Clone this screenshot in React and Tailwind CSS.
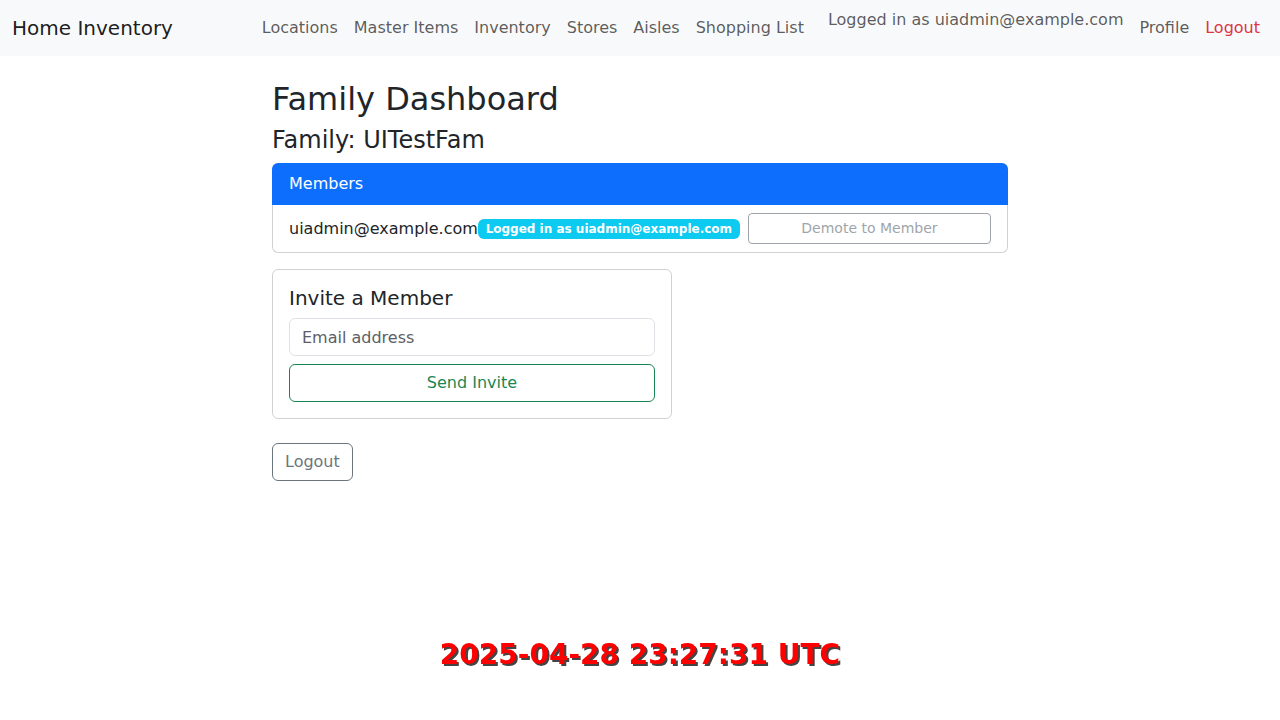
import React from "react"

const navLinks = ["Locations", "Master Items", "Inventory", "Stores", "Aisles", "Shopping List"]

export default function App() {
  return (
    <div className="min-h-screen bg-white text-[#212529] font-['DejaVu_Sans',sans-serif] text-base">
      <nav className="h-14 bg-[#f8f9fa] flex items-center justify-between px-3">
        <a className="text-[20px] leading-[30px] text-black/90">Home Inventory</a>
        <ul className="flex items-start self-stretch py-2">
          {navLinks.map((link) => (
            <li key={link}>
              <a className="block px-2 py-2 leading-6 text-black/65">{link}</a>
            </li>
          ))}
          <li className="ml-4 mr-2 leading-6 text-black/65">Logged in as uiadmin@example.com</li>
          <li>
            <a className="block px-2 py-2 leading-6 text-black/65">Profile</a>
          </li>
          <li>
            <a className="block px-2 py-2 leading-6 text-[#dc3545]">Logout</a>
          </li>
        </ul>
      </nav>

      <main className="w-[736px] mx-auto mt-6">
        <h2 className="text-[32px] leading-[1.2] mb-2">Family Dashboard</h2>
        <h4 className="text-[24px] leading-[1.2] mb-2">Family: UITestFam</h4>

        <div className="rounded-md">
          <div className="h-[42px] bg-[#0d6efd] text-white rounded-t-md flex items-center px-[17px]">
            Members
          </div>
          <div className="border-x border-b border-black/[0.175] rounded-b-md">
            <div className="flex items-center px-4 py-2">
              <span className="leading-6">uiadmin@example.com</span>
              <span className="bg-[#0dcaf0] text-white text-[12px] font-bold leading-none px-[7.8px] py-[4.2px] rounded-[6px]">
                Logged in as uiadmin@example.com
              </span>
              <button
                disabled
                className="ml-2 flex-1 h-[31px] text-[14px] text-[#6c757d] border border-[#6c757d] rounded-[4px] opacity-65"
              >
                Demote to Member
              </button>
            </div>
          </div>
        </div>

        <div className="w-[400px] mt-4 border border-black/[0.175] rounded-md p-4">
          <h5 className="text-[20px] leading-[1.2] mb-2">Invite a Member</h5>
          <input
            type="email"
            placeholder="Email address"
            className="w-full h-[38px] px-3 border border-[#dee2e6] rounded-[6px] placeholder:text-[#5c6066] outline-none"
          />
          <button className="w-full h-[38px] mt-2 border border-[#198754] text-[#198754] rounded-[6px]">
            Send Invite
          </button>
        </div>

        <button className="mt-6 h-[38px] px-3 border border-[#6c757d] text-[#6c757d] rounded-[6px]">
          Logout
        </button>
      </main>

      <div className="fixed inset-x-0 top-[634px] text-center text-[28px] font-bold text-[#ff0000] [text-shadow:2px_2px_0_#444]">
        2025-04-28 23:27:31 UTC
      </div>
    </div>
  )
}
